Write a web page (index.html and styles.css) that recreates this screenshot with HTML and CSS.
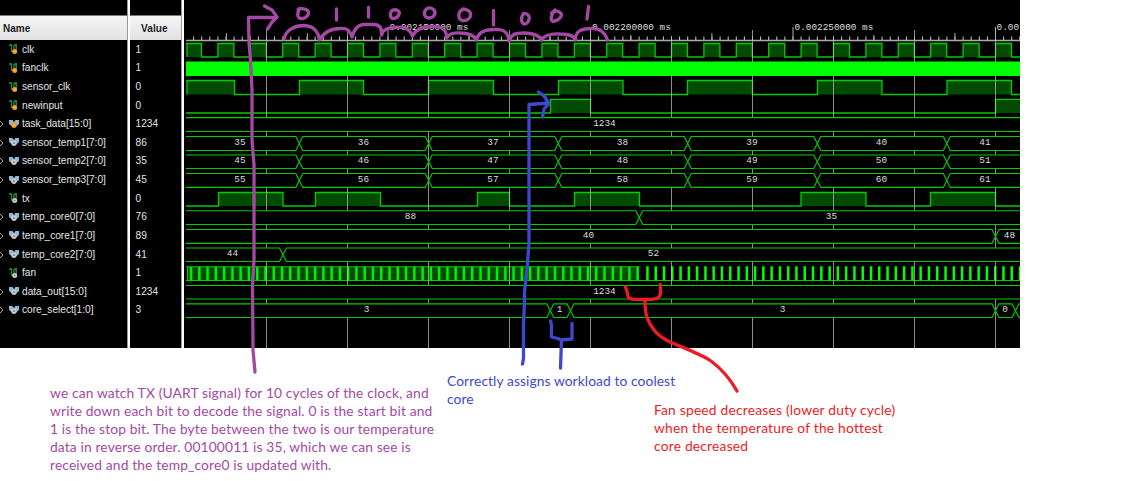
FILE: index.html
```
<!DOCTYPE html>
<html lang="en">
<head>
<meta charset="utf-8">
<title>Waveform</title>
<link rel="stylesheet" href="styles.css">
</head>
<body>
<svg class="defs" width="0" height="0">
  <symbol id="wire" viewBox="0 0 10 11">
    <path d="M0 1H2.5V7H4M5 8V1M5 1H8M7.2 1V6" fill="none" stroke="#2f8f45" stroke-width="1.3"/>
    <circle cx="5.7" cy="7.6" r="2.5" fill="var(--dot)"/><circle cx="5.7" cy="7.6" r=".8" fill="var(--pip)"/>
  </symbol>
  <symbol id="bus" viewBox="0 0 10 11">
    <path d="M0 1H3.6L5 3.2L6.4 1H10V5L7.6 7H2.4L0 5Z" fill="#8fb9cf"/>
    <circle cx="5" cy="6.2" r="2.7" fill="var(--dot)"/><circle cx="5" cy="6.2" r=".9" fill="var(--pip)"/>
  </symbol>
</svg>
<main class="stage">
  <section class="viewer">
    <div class="column names"><header>Name</header><div class="rows" id="names"></div></div>
    <div class="splitter"></div>
    <div class="column values"><header>Value</header><div class="rows" id="values"></div></div>
    <div class="splitter"></div>
    <svg class="waves" id="waves" width="836" height="348" viewBox="184 0 836 348"></svg>
  </section>
  <section class="notes">
    <p class="note purple">we can watch TX (UART signal) for 10 cycles of the clock, and<br>write down each bit to decode the signal. 0 is the start bit and<br>1 is the stop bit. The byte between the two is our temperature<br>data in reverse order. 00100011 is 35, which we can see is<br>received and the temp_core0 is updated with.</p>
    <p class="note blue">Correctly assigns workload to coolest<br>core</p>
    <p class="note red">Fan speed decreases (lower duty cycle)<br>when the temperature of the hottest<br>core decreased</p>
  </section>
  <svg class="ink" width="1148" height="481" viewBox="0 0 1148 481">
    <g stroke="#a349a4">
      <path d="M255 372L253 350L252.500 285L254 260V165L252 140V90L250.500 60L249 42L248.500 17.500H277M264.500 6L272 10L277 17L272 22L267.500 29"/>
      <path d="M284 39C286 29 296 25.500 304 25.500C313 26 318 30 319.500 40C323 34 330 28.500 340 28.500C348 28 350 31 352 37C354 30 357 25 363 24.500H375C380 25 382 29 381.500 35C383 29 388 28 394 27.500C404 26 410 29 412.500 36C416 29 422 26.500 431 26.500C442 26 446 29 447 38C449 33 454 32.500 460 33C469 33 474 35 476.500 40C478 33 484 29.500 494 29.500C504 29 508 32 509 41C511 34 516 33 524 33C533 33 539 35 541.500 40C545 34 552 33.500 560 34C568 34 574 35 575.500 40C575 31 582 28.500 591 28.500C600 28 605 33 607.500 40"/>
      <path d="M299.500 8.500C297 13 297 18.500 301 18.500C305 19 309 15.500 308.500 12C307 8.500 301 8 298 9.500"/>
      <path d="M336.500 9V20M368.500 7.500V17M493.500 10.500V25M588.500 6.500L587 19"/>
      <path d="M392 10.500C389 14 390.500 19 394 18.500C399 17.500 401 12 397.500 10.500C395 9 393 10 392 10.500Z"/>
      <path d="M426.500 9C423 12 424 17 428 18C434 18 437 13 433.500 9.500C431 7.500 428 7.500 426.500 9Z"/>
      <path d="M463 9C458 12 457.500 17 461 20C465 22 471 19 470.500 14C470.500 11 466 9 463 9Z"/>
      <path d="M523.500 13.500C521 17 520.500 22 524 24C528 24.500 530.500 18 528.500 15.500C527 13 525 14 523.500 13.500Z"/>
      <path d="M555 10C551 14 550 20 553 21.500C557 21 562 17.500 561.500 14C559 10.500 555 10 551.500 13"/>
    </g>
    <g stroke="#3f48cc">
      <path d="M522.500 364L523.500 358V323L524.500 302V292L527 270L529 243V104.500L549 103M538.500 92L544 96L549 103.500L544 109L542.500 117"/>
      <path d="M550.500 321L551.500 325V337L558 338.500L561 340L572 339V323.500M561.500 340L560.500 368"/>
    </g>
    <path stroke="#ed1c24" d="M625.500 287L627.500 293C627 299 631 299.500 638 299.500H650C659 299 660.500 297 660.500 291V284.500M645 300C645 308 645 312 647 317C651 329 659 337 670 342C684 348 701 354 711 361C723 370 732 382 737 391"/>
  </svg>
</main>
<script src="waves.js"></script>
</body>
</html>
```
FILE: styles.css
```
body {
  margin: 0;
  background: #fff;
  font-family: "Liberation Sans", Arial, sans-serif;
}
.defs { position: absolute; }
.stage { position: relative; width: 1148px; height: 481px; overflow: hidden; }
.viewer { display: flex; width: 1020px; height: 348px; background: #000; }
.column { box-sizing: border-box; padding-top: 15px; }
.column header {
  box-sizing: border-box;
  height: 25px;
  border-top: 1px solid #777;
  background: linear-gradient(#f5f5f6, #e2e2e4);
  color: #1c1c1c;
  font-size: 10px;
  font-weight: bold;
  line-height: 25px;
}
.names { width: 127px; }
.names header { padding-left: 3px; }
.values { width: 51px; }
.values header { padding-left: 11px; letter-spacing: 0.1px; }
.splitter {
  box-sizing: border-box;
  width: 3px;
  background: #fff;
  border-left: 1px solid #999;
}
.rows { display: grid; grid-auto-rows: 18.62px; padding-top: 0.5px; }
.row {
  display: flex;
  align-items: center;
  height: 18.62px;
  color: #e4e4e4;
  font-size: 10.15px;
  line-height: 18px;
  white-space: nowrap;
}
.names .row { gap: 3px; }
.values .row { padding-left: 5.5px; }
.chevron { width: 6px; height: 8px; fill: none; stroke: #aaa; }
.icon { width: 10px; height: 11px; --dot: #c9c9c9; --pip: #777; }
.icon.input { --dot: #f7941d; --pip: #ffd9a0; }
.waves { display: block; flex: none; }
.waves text {
  font-family: "Liberation Mono", monospace;
  font-size: 9.4px;
  fill: #ddd;
}
.notes { display: flex; align-items: flex-start; padding-left: 50px; }
.note {
  margin: 0;
  font-family: Lato, sans-serif;
  font-size: 13.8px;
  line-height: 18px;
  white-space: nowrap;
}
.purple { width: 397px; padding-top: 36px; color: #a349a4; letter-spacing: 0.14px; }
.blue { width: 207px; padding-top: 24px; color: #3f48cc; letter-spacing: 0.09px; }
.red { padding-top: 53px; color: #ed1c24; letter-spacing: 0.21px; }
.ink {
  position: absolute;
  inset: 0;
  fill: none;
  stroke-width: 3.3px;
  stroke-linecap: round;
  stroke-linejoin: round;
}
```
FILE: waves.js
```
const LEFT = 186, RIGHT = 1020;
const LINE = '#00cc00', FILL = '#004b00', BRIGHT = '#00ff00';

const temps = [299.3, 428.7, 558.3, 687.7, 817.3, 946.8];
const tempLabels = first => [240, 363.5, 493, 622.5, 752, 881.5, 985].map((x, i) => [x, first + i]);
const clock = [];
for (let k = 25; k >= 0; k--) {
  const x = 995.5 - 32.4 * k;
  clock.push([Math.max(187, x), x + 16]);
}

const signals = [
  { name: 'clk', value: 1, input: true, y: [43.5, 57], highs: clock },
  { name: 'fanclk', value: 1, input: true, y: [61.5, 76], solid: true },
  { name: 'sensor_clk', value: 0, input: true, y: [80.5, 94.5], highs: [[187, 234.5], [299.5, 363.5], [428.5, 493.5], [558.5, 623], [687.5, 752.5], [817.5, 882], [947, 1011.5]] },
  { name: 'newinput', value: 0, input: true, y: [99.3, 113], highs: [[550.5, 590.5], [995.5, 1022]] },
  { name: 'task_data[15:0]', value: 1234, input: true, y: [117.6, 131.5], cuts: [], labels: [[604.5, 1234]] },
  { name: 'sensor_temp1[7:0]', value: 86, y: [136.5, 150.5], cuts: temps, labels: tempLabels(35) },
  { name: 'sensor_temp2[7:0]', value: 35, y: [155, 168.5], cuts: temps, labels: tempLabels(45) },
  { name: 'sensor_temp3[7:0]', value: 45, y: [173.5, 187.4], cuts: temps, labels: tempLabels(55) },
  { name: 'tx', value: 0, y: [192.5, 206], highs: [[218.5, 283], [315.5, 380.5], [477.5, 509.5], [574.5, 639.5], [801, 866], [930.5, 995.5]] },
  { name: 'temp_core0[7:0]', value: 76, y: [210.7, 224.5], cuts: [639.3], labels: [[410.5, 88], [831.5, 35]] },
  { name: 'temp_core1[7:0]', value: 89, y: [229.5, 243.3], cuts: [995.5], labels: [[588.5, 40], [1009.5, 48]] },
  { name: 'temp_core2[7:0]', value: 41, y: [248, 261.5], cuts: [283], labels: [[232.5, 44], [653.5, 52]] },
  { name: 'fan', value: 1, y: [266.8, 280.5], fan: true },
  { name: 'data_out[15:0]', value: 1234, y: [285.5, 299], cuts: [], labels: [[604.5, 1234]] },
  { name: 'core_select[1:0]', value: 3, y: [303.8, 317.5], cuts: [550.3, 570.5, 995.5, 1015.5], labels: [[366.5, 3], [559.5, 1], [782.5, 3], [1005, 0]] }
];

const path = (d, stroke, extra = '') => `<path d="${d}" fill="none" stroke="${stroke}" ${extra}/>`;
const rect = (x, y, w, h, fill) => `<rect x="${x}" y="${y}" width="${w}" height="${h}" fill="${fill}"/>`;

let fills = '', lines = '', masks = '', labels = '';
for (const s of signals) {
  const [t, b] = s.y;
  if (s.highs) {
    let d = `M${LEFT} ${s.highs[0][0] === 187 ? t : b}`;
    for (const [x1, x2] of s.highs) {
      fills += rect(x1, t, x2 - x1, b - t, FILL);
      d += `H${x1}V${b}V${t}H${x2}V${b}`;
    }
    lines += path(d + `H${RIGHT + 4}`, LINE, 'stroke-width="1.3"');
  } else if (s.solid) {
    masks += rect(LEFT, t, RIGHT - LEFT, b - t, BRIGHT);
  } else if (s.fan) {
    fills += rect(187, t, 452, b - t, FILL);
    lines += path(`M${LEFT} ${t}H639.500M187.500 ${t}V${b}`, LINE);
    lines += path(`M${LEFT} ${b}H${RIGHT}`, LINE);
    for (let k = 0; k < 55; k++) lines += rect((189.8 + 8.27 * k).toFixed(1), t, 2.5, b - t, '#00ee00');
    for (let x = 646.2; x < RIGHT; x += 8.28) lines += rect(x.toFixed(1), t - .5, 2.5, b - t, BRIGHT);
  } else {
    const edges = [LEFT - 6, ...s.cuts, RIGHT + 6], m = (t + b) / 2;
    for (let i = 0; i < edges.length - 1; i++) {
      const a = edges[i], z = edges[i + 1];
      const p = `M${a} ${m}L${a + 3.5} ${t}H${z - 3.5}L${z} ${m}L${z - 3.5} ${b}H${a + 3.5}Z`;
      masks += `<path d="${p}" fill="#000" stroke="${LINE}" stroke-width="1.15"/>`;
    }
    for (const [x, v] of s.labels) labels += `<text x="${x}" y="${t + 8.4}" text-anchor="middle">${v}</text>`;
  }
}

// Time ruler and grid
let ruler = path('M186 40.5H1020', '#aaa', 'stroke-width="1.4"');
for (let x = 995.5 - 8.1 * 99; x < RIGHT; x += 8.1) ruler += path(`M${x.toFixed(1)} 36.500V40`, '#ccc');
for (const x of [226.4, 307.4, 711.9, 954.9]) ruler += path(`M${x} 33V40`, '#aaa');
for (const x of [469, 550, 630.7, 873.8]) ruler += path(`M${x} 35V40`, '#aaa');
for (const x of [388, 590.5, 793, 995.5]) ruler += path(`M${x} 27V40`, '#aaa');
let grid = '';
for (let k = 0; k < 10; k++) {
  const x = 266.5 + 81 * k;
  grid += path(`M${x} ${[2, 5, 7].includes(k) ? 36 : 30}V348`, '#bbb', 'stroke-opacity=".75"');
}
[[389.5, '0.002150000 ms'], [592, '0.002200000 ms'], [794.5, '0.002250000 ms'], [996.5, '0.00']]
  .forEach(([x, v]) => labels += `<text x="${x}" y="29.500">${v}</text>`);

// The black strip left of the traces hides the closed ends of the bus shapes
document.getElementById('waves').innerHTML =
  rect(184, 0, 836, 348, '#000') + fills + lines + ruler + grid + masks +
  rect(184, 0, 2, 348, '#000') + labels;

document.getElementById('names').innerHTML = signals.map(s => {
  const bus = s.name.includes('[');
  return `<div class="row"><svg class="chevron" viewBox="0 0 6 8">${bus ? '<path d="M0 1L3 4L0 7"/>' : ''}</svg>` +
    `<svg class="icon${s.input ? ' input' : ''}"><use href="#${bus ? 'bus' : 'wire'}"/></svg><span>${s.name}</span></div>`;
}).join('');
document.getElementById('values').innerHTML = signals.map(s => `<div class="row">${s.value}</div>`).join('');
```
